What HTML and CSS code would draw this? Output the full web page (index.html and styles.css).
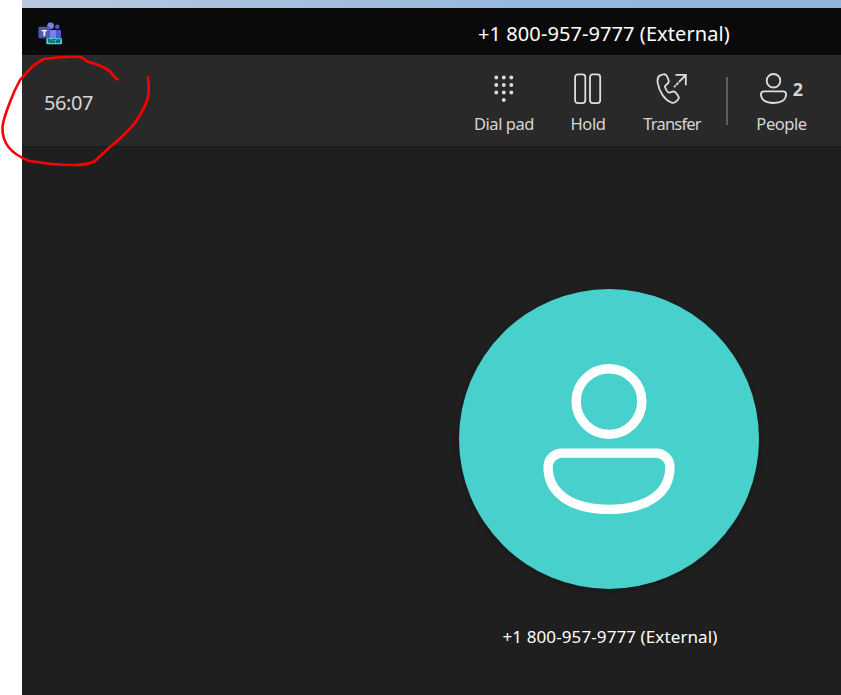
FILE: index.html
```html
<!DOCTYPE html>
<html lang="en">
<head>
    <meta charset="UTF-8">
    <meta name="viewport" content="width=device-width, initial-scale=1.0">
    <title>Call</title>
    <link rel="stylesheet" href="styles.css">
</head>
<body>

    <div class="window">
        <header class="titlebar">
            <svg class="logo" viewBox="0 0 26 24">
                <circle cx="12.6" cy="3.8" r="3.3" fill="#7b83eb"/>
                <circle cx="19.3" cy="4.7" r="2.3" fill="#5059c9"/>
                <path d="M13 8h10v9a3 3 0 0 1-3 2h-7z" fill="#5059c9"/>
                <path d="M9 8h9v12H9z" fill="#7b83eb"/>
                <rect x="0.5" y="4.7" width="11.6" height="11.6" rx="1" fill="#5558af"/>
                <text class="logo-letter" x="6.2" y="13.8" text-anchor="middle">T</text>
                <rect x="8.3" y="16.3" width="15.7" height="6" rx="1" fill="#2fe0df"/>
                <text class="logo-new" x="16.2" y="21.4" text-anchor="middle" textLength="13" lengthAdjust="spacingAndGlyphs">NEW</text>
            </svg>
            <h1 class="title">+1 800-957-9777 (External)</h1>
        </header>

        <div class="toolbar">
            <div class="timer">56:07</div>
            <div class="actions">
                <button class="action dialpad" type="button">
                    <svg class="icon" viewBox="0 0 32 32" width="32" height="32">
                        <g fill="#dedede">
                            <circle cx="8.3" cy="5.5" r="1.9"/><circle cx="15.8" cy="5.5" r="1.9"/><circle cx="23.3" cy="5.5" r="1.9"/>
                            <circle cx="8.3" cy="13" r="1.9"/><circle cx="15.8" cy="13" r="1.9"/><circle cx="23.3" cy="13" r="1.9"/>
                            <circle cx="8.3" cy="20.5" r="1.9"/><circle cx="15.8" cy="20.5" r="1.9"/><circle cx="23.3" cy="20.5" r="1.9"/>
                            <circle cx="15.8" cy="28" r="1.9"/>
                        </g>
                    </svg>
                    <span class="label">Dial pad</span>
                </button>
                <button class="action hold" type="button">
                    <svg class="icon line" viewBox="0 0 32 32" width="32" height="32">
                        <rect x="3.1" y="2.3" width="10.2" height="28.8" rx="2.8"/>
                        <rect x="18" y="2.3" width="10.2" height="28.8" rx="2.8"/>
                    </svg>
                    <span class="label">Hold</span>
                </button>
                <button class="action transfer" type="button">
                    <svg class="icon line" viewBox="0 0 32 32" width="32" height="32">
                        <path d="M4.2 3.4l2.6-.9c1.9-.6 3.6.2 4.3 2l1.4 3.5c.5 1.3.2 2.6-.8 3.5l-2.3 2.1c-.5.5-.6 1-.4 1.6.7 1.9 1.6 3.5 3 5 .5.5 1 .6 1.7.4l2.8-.9c1.3-.4 2.6 0 3.4 1.1l2.1 2.9c1.1 1.5.9 3.2-.4 4.4l-1.4 1.3c-1.5 1.4-3.6 1.8-5.5.9C8.2 27.4 3.2 19.5 1.7 10.9 1.2 7.5 1.5 4.7 4.2 3.4z"/>
                        <path d="M19.5 2.8h10.3v10.5"/>
                        <path d="M18 15.2L29.8 3" stroke-dasharray="2.2 0.8 3.2 0.8 20"/>
                    </svg>
                    <span class="label">Transfer</span>
                </button>
                <span class="divider"></span>
                <button class="action people" type="button">
                    <span class="people-row">
                        <svg class="person" viewBox="0 0 16 16">
                            <circle cx="8" cy="4" r="3.5"/>
                            <path d="M3 9.5h10a1.5 1.5 0 0 1 1.5 1.5c0 2.8-2.5 4.5-6.5 4.5S1.5 13.8 1.5 11A1.5 1.5 0 0 1 3 9.5z"/>
                        </svg>
                        <span class="count">2</span>
                    </span>
                    <span class="label">People</span>
                </button>
            </div>
        </div>

        <main class="stage">
            <div class="avatar">
                <svg class="avatar-icon" viewBox="0 0 16 16">
                    <circle cx="8" cy="4" r="3.5"/>
                    <path d="M3 9.5h10a1.5 1.5 0 0 1 1.5 1.5c0 2.8-2.5 4.5-6.5 4.5S1.5 13.8 1.5 11A1.5 1.5 0 0 1 3 9.5z"/>
                </svg>
            </div>
            <p class="caller">+1 800-957-9777 (External)</p>
        </main>
    </div>

    <!-- red pen mark around the timer -->
    <svg class="ink" viewBox="0 0 160 175" width="160" height="175">
        <path d="M117.500 79.500L112.500 75Q111 71 104 67.500Q97 64 87 61.500Q83 57 79 57Q67 56 44 59Q38 62 33 66Q27 72 20 80Q14 91 10 102Q3 120 2.500 127C2 143 10 153 29 161L37 162Q53 165 74 165Q88 165 95 161L110 147Q124 136 135 123Q144 109 147 101Q150 91 148 77.500"/>
    </svg>

</body>
</html>
```

FILE: styles.css
```css
* {
    box-sizing: border-box;
}
body {
    margin: 0;
    height: 695px;
    padding-left: 22px;
    overflow: hidden;
    background-color: #fff;
    font-family: "Noto Sans", "Open Sans", sans-serif;
    color: #fff;
}
.window {
    display: flex;
    flex-direction: column;
    height: 695px;
    padding-top: 8px;
    background: linear-gradient(90deg, #b7c8e0, #96b8dc 60%, #8fb4dd) top / 100% 8px no-repeat;
}
.titlebar {
    display: flex;
    align-items: center;
    height: 47px;
    padding: 4px 0 0 16px;
    background-color: #0a0a0a;
}
.logo {
    width: 26px;
    height: 24px;
}
.logo-letter {
    font-size: 9.5px;
    font-weight: bold;
    fill: #fff;
}
.logo-new {
    font-size: 5.5px;
    font-weight: 800;
    fill: #053c48;
}
.title {
    margin: 0 0 0 414px;
    font-size: 20px;
    font-weight: 400;
    line-height: 28px;
    letter-spacing: 0.08px;
    white-space: nowrap;
}
.toolbar {
    display: flex;
    height: 92px;
    background-color: #292929;
    border-bottom: 1px solid #1b1b1b;
}
.timer {
    width: 447px;
    padding: 34px 0 0 22px;
    font-size: 20px;
    line-height: 28px;
    letter-spacing: -0.45px;
    color: #d6d6d6;
}
.actions {
    display: flex;
    align-items: flex-start;
    padding-top: 17px;
}
.action {
    display: flex;
    flex-direction: column;
    align-items: center;
    gap: 8px;
    padding: 0;
    border: none;
    background: none;
    font-family: inherit;
    color: #d6d6d6;
    cursor: pointer;
}
.dialpad {
    width: 70px;
}
.hold {
    width: 64px;
    margin-left: 17px;
}
.transfer {
    width: 70px;
    margin-left: 17px;
}
.people {
    width: 70px;
    margin-left: 18px;
}
.label {
    font-size: 16.5px;
    line-height: 24px;
    letter-spacing: -0.45px;
    white-space: nowrap;
}
.transfer .label {
    letter-spacing: -0.8px;
}
.people .label {
    padding-left: 1px;
}
.line,
.person,
.avatar-icon {
    fill: none;
    stroke: #dedede;
    stroke-width: 1.8;
}
.people-row {
    display: flex;
    align-items: center;
    height: 32px;
}
.person {
    width: 31px;
    height: 31px;
    margin-left: -1px;
    stroke-width: 0.95;
}
.count {
    margin-left: 4px;
    padding-top: 2px;
    font-size: 18px;
    font-weight: 700;
    line-height: 32px;
}
.divider {
    width: 2px;
    height: 48px;
    margin: 5px 0 0 19px;
    background-color: #5c5c5c;
}
.stage {
    display: flex;
    flex: 1;
    flex-direction: column;
    align-items: center;
    padding: 142px 0 0 355px;
    background-color: #1f1f1f;
}
.avatar {
    display: flex;
    align-items: center;
    justify-content: center;
    width: 300px;
    height: 300px;
    border-radius: 50%;
    background-color: #48d1cc;
    box-shadow: 0 2px 5px rgba(0, 0, 0, 0.3);
}
.avatar-icon {
    width: 150px;
    height: 150px;
    stroke: #fff;
    stroke-width: 1;
}
.caller {
    margin: 36px 0 0 2px;
    font-size: 17px;
    line-height: 24px;
    letter-spacing: 0.1px;
    white-space: nowrap;
}
.ink {
    position: absolute;
    top: 0;
    left: 0;
    fill: none;
    stroke: #f00;
    stroke-width: 2.6;
    stroke-linecap: round;
    stroke-linejoin: round;
    pointer-events: none;
}
```
